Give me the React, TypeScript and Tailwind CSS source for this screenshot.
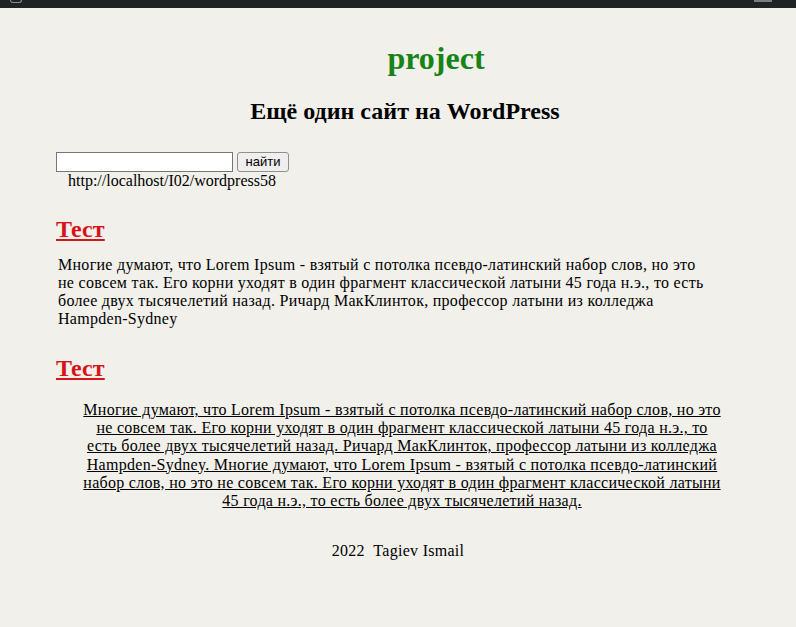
export default function App() {
  const lorem =
    "Многие думают, что Lorem Ipsum - взятый с потолка псевдо-латинский набор слов, но это не совсем так. Его корни уходят в один фрагмент классической латыни 45 года н.э., то есть более двух тысячелетий назад. Ричард МакКлинток, профессор латыни из колледжа Hampden-Sydney";

  return (
    <div className="min-h-[627px] bg-[#f1f0eb] text-black font-['Liberation_Serif',serif]">
      <div className="flex h-[8px] items-start bg-[#1f2326]">
        <div className="ml-[10px] h-[3px] w-[12px] rounded-b-full border-x border-b border-[#8a8d90]" />
        <div className="ml-auto mr-[24px] h-[2px] w-[18px] bg-[#7a7e82]" />
      </div>

      <header className="pt-[32px] text-center">
        <h1 className="pl-[76px] text-[32px] font-bold leading-[37px] text-[#178417]">project</h1>
        <h2 className="mt-[20px] pl-[14px] text-[24px] font-bold leading-[28px]">Ещё один сайт на WordPress</h2>
      </header>

      <div className="mt-[27px] pl-[56px]">
        <form className="flex items-center gap-[4px]" onSubmit={(e) => e.preventDefault()}>
          <input
            type="text"
            className="h-[20px] w-[177px] border border-[#767676] bg-white px-[2px] text-[13px]"
          />
          <button
            type="submit"
            className="h-[20px] w-[52px] rounded-[3px] border border-[#8f8f8f] bg-[#efefef] text-[13px] leading-[16px] font-['Liberation_Sans',sans-serif]"
          >
            найти
          </button>
        </form>
        <div className="pl-[12px] text-[16px] leading-[18px]">http://localhost/I02/wordpress58</div>
      </div>

      <main className="pl-[56px] pr-[60px]">
        <article className="mt-[25px]">
          <h2 className="text-[24px] font-bold leading-[28px] text-[#d5141a] underline">
            <a href="#">Тест</a>
          </h2>
          <p className="mt-[13px] pl-[2px] pr-[23px] text-[16px] leading-[18px] tracking-[0.28px]">{lorem}</p>
        </article>

        <article className="mt-[26px]">
          <h2 className="text-[24px] font-bold leading-[28px] text-[#d5141a] underline">
            <a href="#">Тест</a>
          </h2>
          <p className="mt-[19px] pl-[24px] pr-[12px] text-center text-[16px] leading-[18.2px] tracking-[0.28px] underline">
            {lorem}. Многие думают, что Lorem Ipsum - взятый с потолка псевдо-латинский набор слов, но это не совсем так. Его корни уходят в один фрагмент классической латыни 45 года н.э., то есть более двух тысячелетий назад.
          </p>
        </article>
      </main>

      <footer className="mt-[32px] text-center text-[16px] leading-[18px] tracking-[0.28px]">
        2022&nbsp;&nbsp;Tagiev Ismail
      </footer>
    </div>
  );
}
